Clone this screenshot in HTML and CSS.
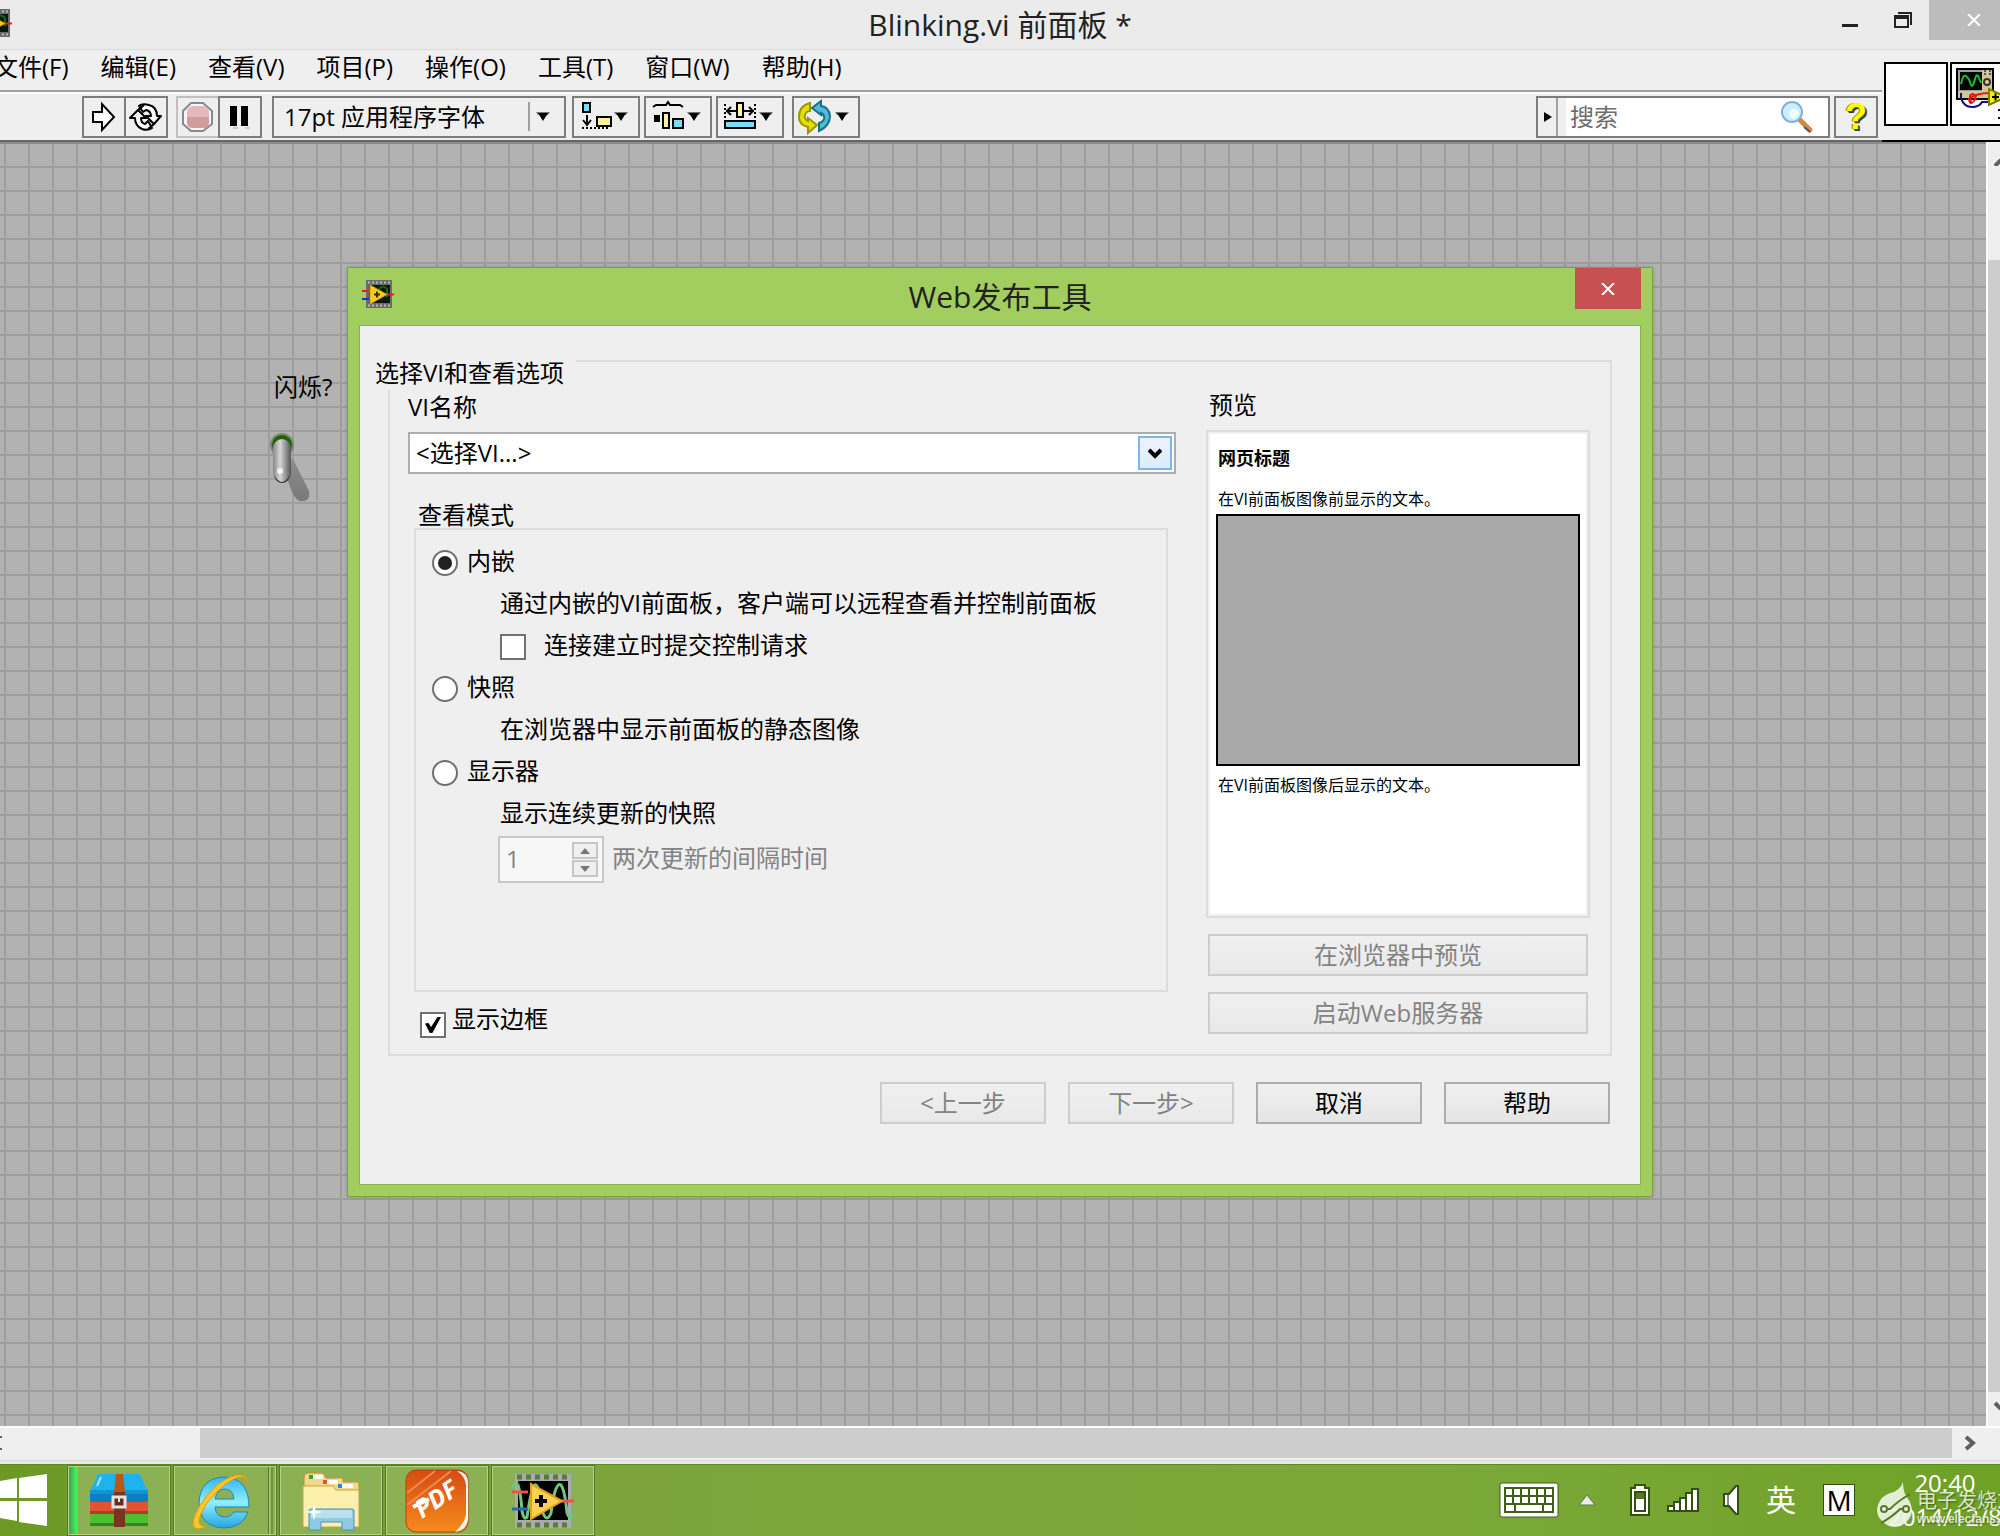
FILE: index.html
```html
<!DOCTYPE html>
<html lang="zh-CN">
<head>
  <meta charset="UTF-8">
  <meta name="viewport" content="width=device-width, initial-scale=1.0">
  <title>Blinking.vi 前面板 *</title>
  <link rel="stylesheet" href="styles.css">
</head>
<body>
  <!-- shared icons -->
  <svg class="defs" aria-hidden="true">
    <symbol id="vi-icon" viewBox="0 0 32 28">
      <rect x="4" width="26" height="28" fill="#6b6b6b"/>
      <path d="M6 2.500H29M6 25.500H29" stroke="#b9b9b9" stroke-width="2" stroke-dasharray="2 2"/>
      <rect x="7" y="5" width="21" height="18" fill="#0b1a08"/>
      <path d="M17 9q4-5 8 0v8" stroke="#0a6b12" stroke-width="2" fill="none"/>
      <path d="M0 11H8M25 14.500H32" stroke="#e8201c" stroke-width="2"/>
      <path d="M0 19H8" stroke="#1c2fe0" stroke-width="2"/>
      <path d="M8 5V24L25 14.500Z" fill="#f7cf17" stroke="#d29a10"/>
      <path d="M12 14.500H18M15 11.500V17.500" stroke="#3a2c00" stroke-width="2"/>
    </symbol>
    <symbol id="caret" viewBox="0 0 14 9">
      <path d="M0 0H14L12 3H2Z" fill="#777"/>
      <path d="M2 1H12L7 9Z" fill="#000"/>
    </symbol>
  </svg>

  <header class="titlebar">
    <svg class="titlebar-icon" width="32" height="28"><use href="#vi-icon"/></svg>
    <h1 class="titlebar-text">Blinking.vi 前面板 *</h1>
    <div class="window-buttons">
      <button class="window-button" aria-label="最小化"><svg width="18" height="20"><path d="M1 15.500H17" stroke="#222" stroke-width="3"/></svg></button>
      <button class="window-button" aria-label="还原"><svg width="18" height="20"><path d="M4 3H17V15" fill="none" stroke="#222" stroke-width="2"/><path d="M1 6V17H14V6" fill="none" stroke="#222" stroke-width="2"/><path d="M0 7H15" stroke="#222" stroke-width="4"/></svg></button>
      <button class="window-button window-close" aria-label="关闭"><svg width="14" height="12"><path d="M1 0L13 12M13 0L1 12" stroke="#fff" stroke-width="2"/></svg></button>
    </div>
  </header>

  <div class="bars">
    <div class="bars-main">
      <nav class="menubar">
        <a href="#">文件(F)</a>
        <a href="#">编辑(E)</a>
        <a href="#">查看(V)</a>
        <a href="#">项目(P)</a>
        <a href="#">操作(O)</a>
        <a href="#">工具(T)</a>
        <a href="#">窗口(W)</a>
        <a href="#">帮助(H)</a>
      </nav>
      <div class="toolbar">
        <div class="tool-group">
          <button class="tool" aria-label="运行"><svg width="40" height="38"><path d="M9 14H18V6L30 19L18 32V24H9Z" fill="#fff" stroke="#000" stroke-width="2"/></svg></button>
          <button class="tool" aria-label="连续运行">
            <svg width="40" height="38">
              <g fill="#fff" stroke="#000" stroke-width="2" stroke-linejoin="round">
                <path d="M13 8Q16 5 23 7Q31 9 31 18H35L28 26L20 18H25Q25 13 20 12L17 14Z"/>
                <path d="M26 30Q22 33 16 31Q9 28 9 20H4L12 12L20 20H15Q15 25 19 26L22 23Z"/>
                <path d="M18 7L12 12M22 31L28 26" fill="none"/>
              </g>
            </svg>
          </button>
        </div>
        <div class="tool-group">
          <button class="tool tool-off" aria-label="中止执行" disabled>
            <svg width="40" height="38">
              <path d="M13 5H25L34 13V26L25 33H13L5 26V13Z" fill="#f6f6f6" stroke="#8a8a8a" stroke-width="2"/>
              <rect x="9" y="8" width="22" height="22" rx="6" fill="#e3b9b9"/>
              <path d="M9 19H31V24Q31 30 25 30H15Q9 30 9 24Z" fill="#d39c9c"/>
            </svg>
          </button>
          <button class="tool" aria-label="暂停"><svg width="40" height="38"><path d="M13 30H18M25 30H30" stroke="#ccc" stroke-width="2"/><path d="M13.500 8V28M24.500 8V28" stroke="#000" stroke-width="7"/></svg></button>
        </div>
        <div class="font-box">
          <select class="font-select" aria-label="字体">
            <option>17pt 应用程序字体</option>
          </select>
          <span class="font-arrow"><svg width="14" height="9"><use href="#caret"/></svg></span>
        </div>
        <div class="tool-menus">
          <button class="tool tool-wide" aria-label="对齐对象">
            <svg width="64" height="38">
              <rect x="9" y="5" width="7" height="9" fill="#7cdcf8" stroke="#000" stroke-width="2"/>
              <path d="M13 17V27M9 22L13 27L17 22" fill="none" stroke="#000" stroke-width="2"/>
              <rect x="23" y="19" width="14" height="9" fill="#fbf3a0" stroke="#000" stroke-width="2"/>
              <path d="M8 30H36" stroke="#000" stroke-width="2" stroke-dasharray="2 2"/>
              <use href="#caret" x="40" y="14" width="14" height="9"/>
            </svg>
          </button>
          <button class="tool tool-wide" aria-label="分布对象">
            <svg width="64" height="38">
              <path d="M7 9L10 7H20L22 4L24 7H34L37 9" fill="none" stroke="#000" stroke-width="2"/>
              <rect x="8" y="17" width="6" height="7" fill="#000"/>
              <rect x="17" y="15" width="6" height="15" fill="#fbf3a0" stroke="#000" stroke-width="2"/>
              <rect x="27" y="21" width="10" height="9" fill="#7cdcf8" stroke="#000" stroke-width="2"/>
              <use href="#caret" x="41" y="14" width="14" height="9"/>
            </svg>
          </button>
          <button class="tool tool-wide" aria-label="调整对象大小">
            <svg width="64" height="38">
              <path d="M7 6V20M37 6V20" stroke="#000" stroke-width="2" stroke-dasharray="2 2"/>
              <path d="M8 13H36M13 9L9 13L13 17M31 9L35 13L31 17" fill="none" stroke="#000" stroke-width="2"/>
              <rect x="19" y="5" width="6" height="14" fill="#fbf3a0" stroke="#000" stroke-width="2"/>
              <rect x="7" y="23" width="30" height="7" fill="#7cdcf8" stroke="#000" stroke-width="2"/>
              <use href="#caret" x="41" y="14" width="14" height="9"/>
            </svg>
          </button>
        </div>
        <button class="tool tool-wide" aria-label="重新排序">
          <svg width="64" height="38">
            <path d="M16 5Q5 8 5 19Q5 27 14 29V35L23 27L14 20V23Q10 21 11 17Q12 13 16 13Z" fill="#e6e000" stroke="#9a9600" stroke-width="2"/>
            <path d="M25 33Q36 28 36 18Q35 9 27 8V3L18 10L27 17V15Q31 17 30 21Q29 24 25 25Z" fill="#52b9d6" stroke="#167089" stroke-width="2"/>
            <use href="#caret" x="41" y="14" width="14" height="9"/>
          </svg>
        </button>

        <div class="search">
          <button class="search-toggle" aria-label="搜索范围"><svg width="8" height="10"><path d="M0 0L8 5L0 10Z"/></svg></button>
          <input class="search-input" type="text" placeholder="搜索" aria-label="搜索">
          <svg class="search-glass" width="34" height="34">
            <path d="M20 20L30 30" stroke="#c98a4c" stroke-width="5" stroke-linecap="round"/>
            <path d="M24 27L30 32" stroke="#69503f" stroke-width="2"/>
            <circle cx="12" cy="12" r="10" fill="#c9efff" stroke="#86aeda" stroke-width="2"/>
            <circle cx="14" cy="14" r="5" fill="#eefcff"/>
          </svg>
        </div>
        <button class="tool help" aria-label="帮助">?</button>
      </div>
    </div>
    <aside class="vi-panel">
      <div class="vi-box"></div>
      <div class="vi-box">
        <svg width="60" height="60">
          <rect x="5" y="5" width="36" height="30" fill="#cdc894" stroke="#000" stroke-width="2"/>
          <path d="M6 6H30V27H6Z" fill="#a0a0a0"/>
          <rect x="8" y="8" width="22" height="18" fill="#000"/>
          <path d="M9 20Q11 10 14 12Q17 14 19 21Q21 24 23 15Q25 8 27 14L29 19" fill="none" stroke="#14c230" stroke-width="2"/>
          <path d="M33 6V12M38 6V12" stroke="#555" stroke-width="2" stroke-dasharray="2 1"/>
          <circle cx="35" cy="18" r="3" fill="#f3c7a6" stroke="#333" stroke-width="2"/>
          <path d="M9 29V34Q12 44 22 43Q28 42 30 38H38" fill="none" stroke="#101080" stroke-width="2"/>
          <path d="M19 38Q16 30 21 30Q26 32 22 37Q18 42 17 35Q24 29 38 29" fill="none" stroke="#f01010" stroke-width="2"/>
          <path d="M37 25V41L54 33Z" fill="#f6ee10" stroke="#847c00" stroke-width="2"/>
          <path d="M40 33H47M43.500 29.500V36.500" stroke="#000" stroke-width="2"/>
          <path d="M46 46H54M46 54H54" stroke="#000" stroke-width="2"/>
        </svg>
      </div>
    </aside>
  </div>

  <main class="workspace">
    <div class="canvas">
      <label class="blink-label" for="blink">闪烁?</label>
      <button class="blink-switch" id="blink" aria-label="闪烁?">
        <svg width="44" height="72">
          <defs>
            <linearGradient id="lever"><stop offset="0" stop-color="#888"/><stop offset=".4" stop-color="#d6d6d6"/><stop offset="1" stop-color="#555"/></linearGradient>
            <linearGradient id="shadow" x2="0" y2="1"><stop offset="0" stop-color="#8c8c8c"/><stop offset="1" stop-color="#7a7a7a"/></linearGradient>
          </defs>
          <path d="M22 24L39 58Q41 69 30 68Q24 67 18 48Z" fill="url(#shadow)"/>
          <circle cx="12" cy="12" r="11" fill="#285a10" stroke="#6f9160" stroke-width="2"/>
          <rect x="3" y="6" width="18" height="44" rx="9" fill="url(#lever)"/>
          <path d="M4 42Q12 56 20 42Q18 50 12 50Q6 50 4 42Z" fill="#333"/>
          <circle cx="10" cy="38" r="3" fill="#f2f2f2"/>
        </svg>
      </button>

      <section class="dialog" role="dialog" aria-labelledby="dialog-title">
        <header class="dialog-head">
          <svg class="dialog-icon" width="32" height="28"><use href="#vi-icon"/></svg>
          <h2 class="dialog-title" id="dialog-title">Web发布工具</h2>
          <button class="dialog-close" aria-label="关闭"><svg width="14" height="12"><path d="M1 0L13 12M13 0L1 12" stroke="#fff" stroke-width="2"/></svg></button>
        </header>
        <form class="dialog-body">
          <fieldset class="group">
            <legend class="group-title">选择VI和查看选项</legend>
            <div class="group-columns">
              <div class="options">
                <label class="field-label" for="vi-name">VI名称</label>
                <div class="vi-select-box">
                  <select class="vi-select" id="vi-name">
                    <option>&lt;选择VI...&gt;</option>
                  </select>
                  <span class="vi-arrow"><svg width="14" height="12"><path d="M1 3L7 9L13 3" fill="none" stroke="#000" stroke-width="4"/></svg></span>
                </div>
                <div class="mode-title" id="mode-title">查看模式</div>
                <div class="mode" role="radiogroup" aria-labelledby="mode-title">
                  <label class="row"><input class="radio" type="radio" name="mode" checked>内嵌</label>
                  <p class="row indent">通过内嵌的VI前面板，客户端可以远程查看并控制前面板</p>
                  <label class="row indent wide-gap"><input class="check" type="checkbox">连接建立时提交控制请求</label>
                  <label class="row"><input class="radio" type="radio" name="mode">快照</label>
                  <p class="row indent">在浏览器中显示前面板的静态图像</p>
                  <label class="row"><input class="radio" type="radio" name="mode">显示器</label>
                  <p class="row indent">显示连续更新的快照</p>
                  <div class="interval">
                    <div class="spinner">
                      <input class="spinner-input" id="interval" type="number" value="1" disabled>
                      <div class="spinner-buttons">
                        <button class="step" type="button" aria-label="增加" disabled><svg width="10" height="6"><path d="M0 6L5 0L10 6Z" fill="#777"/></svg></button>
                        <button class="step" type="button" aria-label="减少" disabled><svg width="10" height="6"><path d="M0 0L5 6L10 0Z" fill="#777"/></svg></button>
                      </div>
                    </div>
                    <label class="interval-label" for="interval">两次更新的间隔时间</label>
                  </div>
                </div>
                <label class="border-option"><input class="check" type="checkbox" checked><span>显示边框</span></label>
              </div>

              <div class="preview">
                <div class="preview-label">预览</div>
                <div class="preview-page">
                  <h3 class="preview-title">网页标题</h3>
                  <p class="preview-text">在VI前面板图像前显示的文本。</p>
                  <div class="preview-image"></div>
                  <p class="preview-text">在VI前面板图像后显示的文本。</p>
                </div>
                <button class="btn" type="button" disabled>在浏览器中预览</button>
                <button class="btn" type="button" disabled>启动Web服务器</button>
              </div>
            </div>
          </fieldset>
          <div class="dialog-actions">
            <button class="btn" type="button" disabled>&lt;上一步</button>
            <button class="btn" type="button" disabled>下一步&gt;</button>
            <button class="btn" type="button">取消</button>
            <button class="btn" type="button">帮助</button>
          </div>
        </form>
      </section>
    </div>
    <div class="vscroll">
      <svg width="12" height="10"><path d="M7 10L13 4" stroke="#606060" stroke-width="4"/></svg>
      <div class="vscroll-thumb"></div>
      <svg width="12" height="10"><path d="M7 3L13 9" stroke="#606060" stroke-width="4"/></svg>
    </div>
  </main>

  <div class="hscroll">
    <svg width="12" height="16"><path d="M0 2H2M0 14H2" stroke="#606060" stroke-width="2"/></svg>
    <div class="hscroll-thumb"></div>
    <svg width="12" height="16"><path d="M2 2L9 8L2 14" fill="none" stroke="#606060" stroke-width="4"/></svg>
  </div>

  <footer class="taskbar">
    <button class="start" aria-label="开始">
      <svg width="50" height="56">
        <path d="M0 8L17 5V25H0ZM19 5L47 1V25H19ZM0 28H17V48L0 45ZM19 28H47V53L19 49Z" fill="#fff"/>
      </svg>
    </button>
    <div class="tasks">
      <button class="task task-alert" aria-label="压缩软件">
        <svg width="60" height="56">
          <path d="M9 1H51L59 19H1Z" fill="#1db4ee"/>
          <rect x="1" y="18" width="58" height="11" rx="1" fill="#0b7fc4"/>
          <path d="M1 17H59V21H1Z" fill="#1492d6"/>
          <rect x="1" y="29" width="58" height="12" rx="1" fill="#e4532f"/>
          <path d="M1 38H59V41H1Z" fill="#b53a22"/>
          <rect x="1" y="41" width="58" height="12" rx="2" fill="#4fbd2e"/>
          <path d="M1 50H59V53H1Z" fill="#2f8a1c"/>
          <path d="M27 1H34L36 19H25Z" fill="#b55a1e"/>
          <path d="M25 19H36V54H25Z" fill="#7a3320"/>
          <path d="M12 4L8 13" stroke="#a5e3fb" stroke-width="2"/>
          <rect x="24" y="24" width="12" height="10" fill="#6a2c1a" stroke="#e3e3e3" stroke-width="3"/>
          <path d="M30 24V29" stroke="#e3e3e3" stroke-width="2"/>
        </svg>
      </button>
      <button class="task task-stack" aria-label="Internet Explorer">
        <svg width="60" height="60">
          <defs>
            <linearGradient id="ie" x2="0" y2="1"><stop offset="0" stop-color="#35b4ea"/><stop offset=".5" stop-color="#8ff0ff"/><stop offset="1" stop-color="#27a3e0"/></linearGradient>
          </defs>
          <path d="M58 36H24Q25 46 34 46Q40 46 43 41H57Q51 57 33 57Q9 56 8 32Q9 7 33 6Q58 7 58 36ZM24 28H43Q42 18 34 18Q26 18 24 28Z" fill="url(#ie)" stroke="#1f86bd"/>
          <path d="M57 15Q58 3 46 4Q26 8 9 34Q-2 54 4 57Q8 60 16 54Q8 57 8 50Q10 36 27 20Q42 5 52 6Q56 7 57 15Z" fill="#f9c62c" stroke="#dc9a16"/>
        </svg>
      </button>
      <button class="task" aria-label="文件资源管理器">
        <svg width="60" height="60">
          <path d="M3 56V6Q3 2 7 2H22L25 7H42V11H57Q58 11 58 14V56Z" fill="#f2d88a" stroke="#b8923d"/>
          <rect x="8" y="4" width="14" height="4" fill="#fff"/><rect x="8" y="4" width="4" height="4" fill="#3aa51d"/>
          <rect x="22" y="9" width="15" height="4" fill="#fff"/><rect x="22" y="9" width="4" height="4" fill="#e4552a"/>
          <path d="M2 15H32L35 19H58V56H2Z" fill="#fdf0ae" stroke="#c9a24a"/>
          <rect x="37" y="13" width="15" height="4" fill="#fff"/><rect x="37" y="13" width="4" height="4" fill="#2f86cf"/>
          <path d="M8 59V40Q8 38 10 38H51Q53 38 53 40V59H41V51H20V59Z" fill="#8fc9e4" stroke="#4b93b8"/>
          <path d="M10 39H51V47H10Z" fill="#b9e1f0"/>
          <path d="M13 32L14.500 39.500L22 41L14.500 42.500L13 50L11.500 42.500L4 41L11.500 39.500Z" fill="#fff"/>
        </svg>
      </button>
      <button class="task" aria-label="PDF 阅读器">
        <svg width="64" height="64">
          <defs>
            <linearGradient id="pdf" x2="0" y2="1"><stop offset="0" stop-color="#d64c12"/><stop offset="1" stop-color="#f78a1c"/></linearGradient>
          </defs>
          <rect x="1" y="1" width="62" height="62" rx="10" fill="url(#pdf)" stroke="#b8400c"/>
          <path d="M2 24L30 2M2 36L46 2" stroke="#ee8a55" stroke-width="2"/>
          <path d="M52 2Q63 3 63 14V50Q62 61 50 63Q59 55 61 46V16Q60 7 52 2Z" fill="#f4f4f4"/>
          <path d="M8 38L24 30" stroke="#fff" stroke-width="4"/>
          <text class="pdf-text" x="17" y="50" transform="rotate(-34 17 50)">PDF</text>
        </svg>
      </button>
      <button class="task" aria-label="LabVIEW">
        <svg width="64" height="56">
          <rect x="4" y="1" width="56" height="54" fill="#a9abb0"/>
          <path d="M6 4H60M6 52H60" stroke="#5c7a33" stroke-width="5" stroke-dasharray="5 4"/>
          <rect x="7" y="8" width="50" height="39" fill="#000"/>
          <path d="M1 16Q3 8 7 12Q10 22 11 38Q13 48 16 44Q21 10 25 12Q29 14 32 40Q36 50 40 40Q44 8 50 12Q54 18 56 40Q59 48 63 42" fill="none" stroke="#6fc77c" stroke-width="3"/>
          <path d="M1 19H17M50 28H63" stroke="#f0504c" stroke-width="3"/>
          <path d="M1 36H17" stroke="#2a69b0" stroke-width="3"/>
          <path d="M20 11V46L51 28Z" fill="#ffd052" stroke="#e0a11c" stroke-width="2"/>
          <path d="M24 28H36M30 22V34" stroke="#000" stroke-width="4"/>
        </svg>
      </button>
    </div>

    <div class="tray">
      <svg class="tray-keyboard" width="60" height="36">
        <rect x="1" y="1" width="58" height="34" rx="2" fill="#fff" stroke="#3f5f17"/>
        <rect x="5" y="5" width="50" height="26" fill="#3f5f17"/>
        <path d="M7 10H53M7 18H53" stroke="#fff" stroke-width="6" stroke-dasharray="6 2"/>
        <path d="M7 26H15M17 26H43M45 26H53" stroke="#fff" stroke-width="6"/>
      </svg>
      <svg class="tray-more" width="18" height="12"><path d="M9 1L17 11H1Z" fill="#ececec" stroke="#5d7a38"/></svg>
      <svg class="tray-battery" width="20" height="32">
        <path d="M5 4V1H15V4H19V31H1V4Z" fill="#fff" stroke="#33500f" stroke-width="2"/>
        <rect x="5" y="8" width="10" height="19" fill="#fff" stroke="#33500f" stroke-width="2"/>
        <rect x="6" y="9" width="8" height="6" fill="#55782a"/>
      </svg>
      <svg class="tray-signal" width="34" height="26" fill="#fff" stroke="#33500f" stroke-width="2">
        <path d="M2 19H8V24H2ZM8 15H14V24H8ZM14 11H20V24H14ZM20 6H26V24H20ZM26 2H32V24H26Z"/>
      </svg>
      <svg class="tray-volume" width="18" height="32">
        <path d="M2 10H7L14 2H16V30H14L7 22H2Z" fill="#fff" stroke="#33500f" stroke-width="2"/>
        <path d="M6 11V21" stroke="#888" stroke-width="2"/>
      </svg>
      <span class="tray-lang">英</span>
      <span class="tray-mode">M</span>
      <div class="clock">
        <time>20:40</time>
        <time>2014/12/8</time>
      </div>
      <div class="mark">
        <svg width="38" height="48">
          <path d="M27 1Q27 10 30 15Q40 28 33 38Q24 50 11 44Q-2 36 2 24Q5 15 14 12Q24 10 27 1Z" fill="#eef4e4" fill-opacity=".92"/>
          <path d="M9 28H14Q22 20 34 13M29 28H24Q16 36 5 42" fill="none" stroke="#55782a" stroke-width="2"/>
          <circle cx="8" cy="28" r="3" fill="#eef4e4" stroke="#55782a" stroke-width="2"/>
          <circle cx="30" cy="28" r="3" fill="#eef4e4" stroke="#55782a" stroke-width="2"/>
        </svg>
        <div class="mark-text">
          <span class="mark-name">电子发烧友</span>
          <span class="mark-url">www.elecfans.com</span>
        </div>
      </div>
    </div>
  </footer>
</body>
</html>
```

FILE: styles.css
```css
* {
  box-sizing: border-box;
}
body {
  margin: 0;
  height: 100vh;
  display: flex;
  flex-direction: column;
  overflow: hidden;
  font-family: "Open Sans", "Noto Sans CJK SC", sans-serif;
  font-size: 24px;
  color: #000;
  background: #efefef;
}
h1, h2, h3, p {
  margin: 0;
  font-weight: normal;
}
button, input, select {
  font: inherit;
  color: inherit;
  margin: 0;
  padding: 0;
  border-radius: 0;
}
button {
  display: flex;
  align-items: center;
  justify-content: center;
}
svg {
  display: block;
  flex: none;
}
.defs {
  position: absolute;
  width: 0;
  height: 0;
}

/* main window title */
.titlebar {
  display: grid;
  grid-template-columns: 1fr auto 1fr;
  height: 50px;
  background: #ebebeb;
  border-bottom: 1px solid #d9d9d9;
}
.titlebar-icon {
  margin: 9px 0 0 -20px;
}
.titlebar-text {
  font-size: 30px;
  line-height: 50px;
  color: #222;
}
.window-buttons {
  display: flex;
  justify-content: flex-end;
}
.window-button {
  width: 53px;
  height: 40px;
  border: 0;
  background: none;
}
.window-close {
  width: 71px;
  padding-left: 18px;
  background: #bcbcbc;
}

/* menus and toolbar */
.bars {
  display: flex;
}
.bars-main {
  flex: 1;
  min-width: 0;
}
.menubar {
  display: flex;
  gap: 32px;
  height: 42px;
  margin-left: -6px;
  line-height: 34px;
  white-space: nowrap;
  border-bottom: 2px solid #a0a0a0;
}
.menubar a {
  color: #000;
  text-decoration: none;
}
.toolbar {
  display: flex;
  height: 50px;
  padding: 2px 4px 0 82px;
  border-top: 2px solid #fff;
  border-bottom: 2px solid #666;
}
.tool-group {
  display: flex;
  margin-right: 8px;
}
.tool {
  width: 44px;
  height: 42px;
  border: 2px solid #7d7d7d;
  background: #efefef;
}
.tool-group .tool + .tool {
  margin-left: -2px;
}
.tool-off {
  border-color: #c0c0c0;
}
.tool-wide {
  width: 68px;
}
.font-box {
  position: relative;
  width: 294px;
  height: 42px;
  margin: 0 6px 0 2px;
}
.font-select {
  appearance: none;
  width: 100%;
  height: 100%;
  padding: 0 0 2px 10px;
  border: 2px solid #7d7d7d;
  background: #efefef;
}
.font-arrow {
  position: absolute;
  top: 6px;
  right: 8px;
  padding: 10px 8px 10px 6px;
  border-left: 2px solid #a0a0a0;
  pointer-events: none;
}
.tool-menus {
  display: flex;
  gap: 4px;
  margin-right: 8px;
}
.search {
  display: flex;
  align-items: center;
  width: 294px;
  height: 42px;
  margin: 0 4px 0 auto;
  border: 2px solid #7d7d7d;
  background: #fff;
}
.search-toggle {
  width: 28px;
  height: 38px;
  padding-right: 8px;
  border: 0;
  background: linear-gradient(90deg, #efefef 18px, #a0a0a0 18px, #a0a0a0 20px, #efefef 20px);
}
.search-input {
  flex: 1;
  min-width: 0;
  height: 38px;
  padding: 0 0 2px 4px;
  border: 0;
  background: none;
}
.search-input::placeholder {
  color: #6d6d6d;
}
.search-glass {
  margin-right: 14px;
}
.help {
  font-family: "Liberation Sans", sans-serif;
  font-size: 36px;
  font-weight: bold;
  line-height: 38px;
  color: #ffff00;
  text-shadow: 1px 1px 0 #55550a, -1px 0 0 #84840a, 2px 2px 0 #333;
}
.vi-panel {
  display: flex;
  gap: 2px;
  width: 118px;
  padding: 12px 0 0 2px;
  overflow: hidden;
  border-bottom: 2px solid #000;
}
.vi-box {
  flex: none;
  width: 64px;
  height: 64px;
  border: 2px solid #000;
  background: #fff;
}

/* front panel */
.workspace {
  flex: 1;
  display: flex;
  min-height: 0;
}
.canvas {
  position: relative;
  flex: 1;
  overflow: hidden;
  border-top: 2px solid #8c8c8c;
  background-color: #b2b2b2;
  background-image: linear-gradient(#9e9e9e 2px, transparent 2px), linear-gradient(90deg, #9e9e9e 2px, transparent 2px);
  background-size: 24px 24px;
  background-position: 4px 22px;
}
.blink-label {
  position: absolute;
  left: 274px;
  top: 226px;
  line-height: 34px;
}
.blink-switch {
  position: absolute;
  left: 270px;
  top: 289px;
  border: 0;
  background: none;
}
.vscroll {
  display: flex;
  flex-direction: column;
  justify-content: space-between;
  width: 14px;
  padding: 14px 0 16px;
  border-left: 2px solid #fff;
  background: #efefef;
}
.vscroll-thumb {
  flex: 1;
  margin: 94px 0 8px;
  background: #cdcdcd;
}
.hscroll {
  display: flex;
  align-items: center;
  height: 38px;
  padding: 0 24px 6px 0;
  border-top: 2px solid #fff;
  background: linear-gradient(#efefef 32px, #dadada 32px, #dadada 33px, #e8e8e8 33px);
}
.hscroll-thumb {
  flex: 1;
  height: 30px;
  margin: 0 12px 0 188px;
  background: #cdcdcd;
}

/* publishing dialog */
.dialog {
  position: absolute;
  left: 347px;
  right: 333px;
  top: 123px;
  padding: 0 12px 12px;
  border: 1px solid #7a9f45;
  background: #a2ce5f;
  box-shadow: 0 0 4px rgba(0, 0, 0, 0.2);
}
.dialog-head {
  display: grid;
  grid-template-columns: 1fr auto 1fr;
  height: 58px;
}
.dialog-icon {
  margin: 12px 0 0 2px;
}
.dialog-title {
  font-size: 30px;
  line-height: 58px;
  color: #222;
}
.dialog-close {
  justify-self: end;
  width: 66px;
  height: 41px;
  margin-right: -1px;
  border: 0;
  background: #c75050;
}
.dialog-body {
  padding: 34px 28px 60px;
  background: #efefef;
  outline: 1px solid #8ab04c;
}
.group {
  min-width: 0;
  margin: 0;
  padding: 0;
  border: 2px solid #dcdcdc;
}
.group-title {
  float: left;
  margin: -2px 0 0 -20px;
  padding: 0 12px 4px 5px;
  line-height: 26px;
  background: #efefef;
}
.group-columns {
  clear: both;
  display: flex;
  gap: 30px;
  padding: 0 20px 16px 18px;
}
.options {
  flex: 2;
}
.field-label {
  display: block;
  line-height: 34px;
}
.vi-select-box {
  position: relative;
  height: 42px;
  margin: 8px 0 28px;
}
.vi-select {
  appearance: none;
  width: 100%;
  height: 100%;
  padding: 0 0 2px 6px;
  border: 2px solid #abadb3;
  background: #fff;
}
.vi-arrow {
  position: absolute;
  top: 4px;
  right: 4px;
  display: grid;
  place-items: center;
  width: 34px;
  height: 34px;
  border: 2px solid #7eb4ea;
  background: linear-gradient(#ecf4fc, #dcecfc);
  pointer-events: none;
}
.mode-title {
  padding-left: 10px;
  line-height: 26px;
}
.mode {
  margin: 0 8px 11px 6px;
  padding: 12px 16px 107px;
  border: 2px solid #dcdcdc;
}
.row {
  display: flex;
  gap: 9px;
  height: 42px;
  line-height: 38px;
}
.row .radio, .row .check {
  margin-top: 8px;
}
.indent {
  padding-left: 68px;
}
.wide-gap {
  gap: 18px;
}
.radio, .check {
  appearance: none;
  flex: none;
  display: grid;
  place-items: center;
  width: 26px;
  height: 26px;
  border: 2px solid #707070;
  background: #fff;
}
.radio {
  border-radius: 50%;
}
.radio:checked::after {
  content: "";
  width: 14px;
  height: 14px;
  border-radius: 50%;
  background: #212121;
}
.check:checked::after {
  content: "";
  width: 16px;
  height: 16px;
  background: #000;
  clip-path: polygon(0 40%, 22% 38%, 38% 62%, 78% 0, 100% 0, 46% 100%, 30% 100%);
}
.interval {
  display: flex;
  gap: 8px;
  height: 47px;
  padding-left: 66px;
  color: #838383;
}
.interval-label {
  line-height: 43px;
}
.spinner {
  display: flex;
  justify-content: space-between;
  width: 106px;
  height: 47px;
  padding: 4px;
  border: 2px solid #c6c8cc;
  background: #f7f7f7;
}
.spinner-input {
  appearance: textfield;
  width: 60px;
  padding: 0 0 2px 2px;
  border: 0;
  background: none;
}
.spinner-input::-webkit-inner-spin-button {
  appearance: none;
}
.spinner-buttons {
  display: flex;
  flex-direction: column;
  gap: 1px;
}
.step {
  flex: 1;
  width: 26px;
  border: 2px solid #c6c6c6;
  background: #efefef;
}
.border-option {
  display: flex;
  gap: 6px;
  height: 35px;
  padding-left: 12px;
  line-height: 32px;
}
.border-option .check {
  align-self: flex-end;
}
.preview {
  flex: 1;
}
.preview-label {
  padding-left: 3px;
  line-height: 30px;
}
.preview-page {
  margin: 10px 0 16px;
  padding: 12px 8px 118px;
  border: 2px solid #dcdcdc;
  background: #fff;
  box-shadow: inset 0 0 0 2px #efefef;
}
.preview-title {
  padding-left: 2px;
  font-size: 18px;
  font-weight: bold;
  line-height: 28px;
}
.preview-text {
  padding-left: 2px;
  font-size: 16px;
  line-height: 26px;
}
.preview-title + .preview-text {
  margin-top: 14px;
}
.preview-image {
  height: 252px;
  margin: 2px 0 6px;
  border: 2px solid #000;
  background: #a9a9a9;
}
.btn {
  height: 42px;
  padding-bottom: 4px;
  border: 2px solid #acacac;
  background: linear-gradient(#f0f0f0, #e5e5e5);
}
.btn:disabled {
  color: #838383;
  border-color: #cdcdcd;
  background: linear-gradient(#f0f0f0, #e9e9e9);
}
.preview .btn {
  width: 380px;
  margin: 0 2px 16px;
}
.preview .btn:last-child {
  margin-bottom: 0;
}
.dialog-actions {
  display: flex;
  justify-content: flex-end;
  gap: 22px;
  padding: 26px 2px 0;
}
.dialog-actions .btn {
  width: 166px;
}

/* taskbar */
.taskbar {
  display: flex;
  height: 72px;
  border-top: 1px solid #5b8a1f;
  background: linear-gradient(90deg, #6c9824, #7ba53a 30%, #7aa838 75%, #6fa126);
}
.start {
  width: 67px;
  padding: 0 17px 0 0;
  border: 0;
  background: none;
}
.tasks {
  display: flex;
  gap: 2px;
}
.task {
  width: 104px;
  height: 71px;
  border: 1px solid #557a20;
  background: #8cb155;
  box-shadow: inset 0 0 0 1px #b4d08a;
}
.task-alert {
  background: linear-gradient(90deg, #4f9a55 1px, #33ff55 9px, #8cb155 10px);
}
.task-stack {
  padding-right: 8px;
  background: linear-gradient(90deg, #8cb155 94px, #557a20 94px, #557a20 95px, #b4d08a 95px, #8cb155 97px, #557a20 98px, #8cb155 99px);
}
.pdf-text {
  font: italic bold 25px "Open Sans", sans-serif;
  fill: #fff;
}
.tray {
  position: relative;
  display: flex;
  align-items: center;
  height: 69px;
  margin: 0 -5px 0 auto;
  color: #fff;
}
.tray-more {
  margin: 0 34px 0 19px;
}
.tray-signal {
  margin: 0 22px 0 16px;
}
.tray-lang {
  margin: 0 27px 0 26px;
  font-size: 30px;
  line-height: 40px;
}
.tray-mode {
  width: 32px;
  height: 32px;
  border: 1px solid #33500f;
  background: #fff;
  color: #000;
  font-size: 28px;
  line-height: 30px;
  text-align: center;
}
.clock {
  display: flex;
  flex-direction: column;
  width: 120px;
  margin-left: 30px;
  line-height: 34px;
  text-align: center;
}
.mark {
  position: absolute;
  top: 16px;
  right: 91px;
  display: flex;
  width: 38px;
}
.mark-text {
  display: flex;
  flex-direction: column;
  padding: 9px 0 0 3px;
  white-space: nowrap;
  color: #eef4e4;
  text-shadow: 1px 1px 2px #33500f;
  opacity: 0.85;
}
.mark-name {
  font-size: 20px;
  line-height: 22px;
}
.mark-url {
  font-family: "Liberation Sans", sans-serif;
  font-size: 12px;
  font-weight: bold;
  line-height: 14px;
}
```
